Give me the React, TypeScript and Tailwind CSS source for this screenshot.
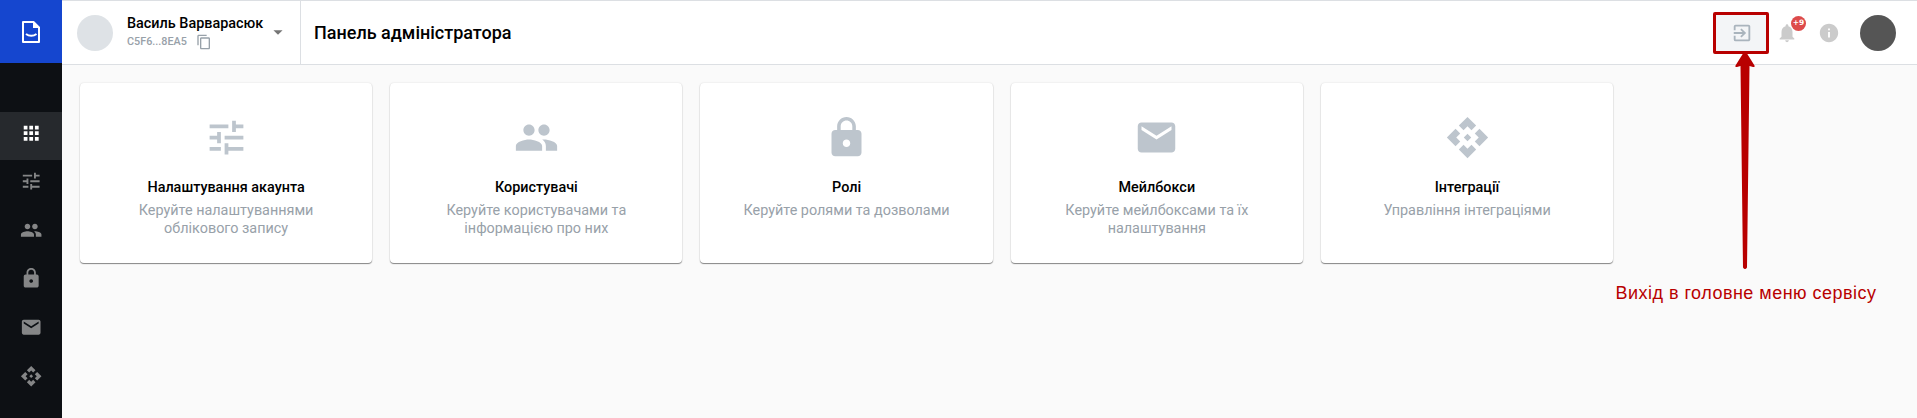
import type { IconType } from "react-icons";
import {
  MdApi, MdApps, MdArrowDropDown, MdContentCopy, MdEmail, MdExitToApp,
  MdInfo, MdLock, MdNotifications, MdPeople, MdTune,
} from "react-icons/md";

const cards: { Icon: IconType; title: string; text: string }[] = [
  { Icon: MdTune, title: "Налаштування акаунта", text: "Керуйте налаштуваннями облікового запису" },
  { Icon: MdPeople, title: "Користувачі", text: "Керуйте користувачами та інформацією про них" },
  { Icon: MdLock, title: "Ролі", text: "Керуйте ролями та дозволами" },
  { Icon: MdEmail, title: "Мейлбокси", text: "Керуйте мейлбоксами та їх налаштування" },
  { Icon: MdApi, title: "Інтеграції", text: "Управління інтеграціями" },
];

const navIcons: IconType[] = [MdApps, MdTune, MdPeople, MdLock, MdEmail, MdApi];

function Logo() {
  return (
    <svg viewBox="0 0 18 22" className="h-[22px] w-[18px]" fill="none" stroke="#fff" strokeWidth="2">
      <path d="M1 1h10.500L17 6.500V21H1z" strokeLinejoin="round" />
      <path d="M11 0v7h7z" fill="#fff" stroke="none" />
      <path d="M4 13c3 2.400 7.500 2.400 10.500 0" />
    </svg>
  );
}

function Sidebar() {
  return (
    <aside className="flex w-[62px] shrink-0 flex-col bg-[#0d1014]">
      <div className="flex h-[63px] items-center justify-center bg-[#1546cf] pt-[1px]">
        <Logo />
      </div>
      <nav className="mt-[49px] flex flex-col gap-[0.6px]">
        {navIcons.map((Icon, i) => (
          <a
            key={i}
            className={
              i === 0
                ? "flex h-12 items-center justify-center bg-[#26292d] pb-[6.4px] text-white"
                : "flex h-12 items-center justify-center pb-[6.4px] text-[#858687]"
            }
          >
            <Icon className="size-[22.4px]" />
          </a>
        ))}
      </nav>
    </aside>
  );
}

function Header() {
  return (
    <header className="flex h-[65px] items-stretch border-y border-[#dcdfe3] bg-white">
      <div className="flex w-[239px] items-center border-r border-[#dcdfe3] pl-[15px]">
        <div className="size-9 rounded-full bg-[#dee2e6]" />
        <div className="ml-[14px] w-[138px] pt-[1px]">
          <div className="text-[14.4px] leading-[18px] font-medium whitespace-nowrap text-black">Василь Варварасюк</div>
          <div className="flex h-[18px] items-center gap-[9px] text-[10.8px] font-medium text-[#98a1a9]">
            C5F6...8EA5
            <MdContentCopy className="size-4" />
          </div>
        </div>
        <MdArrowDropDown className="mb-[2px] ml-[2px] size-[22px] text-[#757575]" />
      </div>
      <h1 className="flex items-center pl-[13px] text-[18px] font-medium text-black">Панель адміністратора</h1>
      <div className="ml-auto flex items-center pr-[21px]">
        <button className="flex h-[42px] w-[56px] items-center justify-center rounded-[2px] border-[3px] border-[#b80000] bg-[#f3f5f7] pl-[1px]">
          <MdExitToApp className="size-[22px] text-[#a9b4bd]" />
        </button>
        <div className="relative ml-[7px] text-[#cbcbcb]">
          <MdNotifications className="size-[22px]" />
          <span className="absolute -top-[6px] left-[15px] flex size-[15px] items-center justify-center rounded-full bg-[#dd4b4b] font-['DejaVu_Sans',sans-serif] text-[7.5px] font-bold text-white">
            +9
          </span>
        </div>
        <MdInfo className="ml-[20px] size-[22px] text-[#cbcbcb]" />
        <div className="ml-[20px] size-9 rounded-full bg-[#555]" />
      </div>
    </header>
  );
}

export default function App() {
  return (
    <div className="relative flex h-[418px] w-[1917px] overflow-hidden bg-[#fafafa] font-['Roboto',sans-serif]">
      <Sidebar />
      <div className="flex grow flex-col">
        <Header />
        <main className="flex gap-[18px] pt-[18px] pl-[18px]">
          {cards.map(({ Icon, title, text }) => (
            <section
              key={title}
              className="flex h-[180px] w-[292.24px] flex-col items-center rounded-[4px] bg-white px-10 pt-[32px] text-center shadow-[0_1px_1px_rgba(0,0,0,0.45),0_0_2px_rgba(0,0,0,0.12)]"
            >
              <Icon className="size-[45px] text-[#bdc5cd]" />
              <h2 className="mt-[18px] text-[14.4px] leading-[20px] font-medium text-black">{title}</h2>
              <p className="mt-[4px] text-[14.4px] leading-[18px] text-[#98a1a9]">{text}</p>
            </section>
          ))}
        </main>
      </div>
      <svg className="absolute top-[52px] left-[1734px] h-[218px] w-[22px]" viewBox="0 0 22 218" fill="#b80000">
        <path d="M11 0Q12 0 13 1.500L20.500 13.500Q21 15.500 19 15L15.500 14L13 215.500Q11 218.500 9 215.500L6.500 14L3 15Q1 15.500 1.500 13.500L9 1.500Q10 0 11 0z" />
      </svg>
      <p className="absolute top-[282px] left-[1615.5px] font-['Liberation_Sans',sans-serif] text-[18px] leading-[22px] tracking-[0.48px] whitespace-nowrap text-[#b80000]">
        Вихід в головне меню сервісу
      </p>
    </div>
  );
}
